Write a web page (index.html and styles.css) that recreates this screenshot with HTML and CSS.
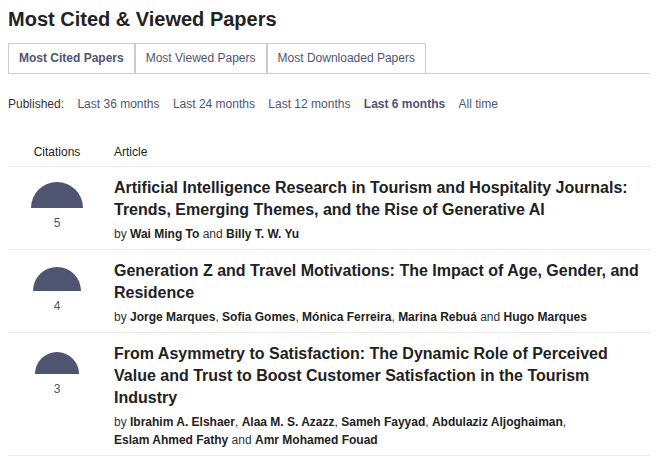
FILE: index.html
```html
<!DOCTYPE html>
<html lang="en">
<head>
<meta charset="utf-8">
<title>Most Cited &amp; Viewed Papers</title>
<link rel="stylesheet" href="styles.css">
</head>
<body>
<h1 class="page-title">Most Cited &amp; Viewed Papers</h1>
<div class="tabs">
  <a class="tab tab-active">Most Cited Papers</a>
  <a class="tab">Most Viewed Papers</a>
  <a class="tab">Most Downloaded Papers</a>
</div>
<div class="period">
  <span class="period-label">Published:</span>
  <a class="period-link">Last 36 months</a>
  <a class="period-link">Last 24 months</a>
  <a class="period-link">Last 12 months</a>
  <a class="period-link period-active">Last 6 months</a>
  <a class="period-link">All time</a>
</div>
<div class="papers">
  <div class="papers-row papers-head">
    <div class="col-cit">Citations</div>
    <div class="col-art">Article</div>
  </div>
  <div class="papers-row paper">
    <div class="col-cit cit-cell">
      <div class="dome-box"><div class="dome" style="width:52px;height:26px"></div></div>
      <div class="cit-num">5</div>
    </div>
    <div class="col-art">
      <div class="paper-title">Artificial Intelligence Research in Tourism and Hospitality Journals: Trends, Emerging Themes, and the Rise of Generative AI</div>
      <div class="paper-authors">by <b>Wai Ming To</b> and <b>Billy T. W. Yu</b></div>
    </div>
  </div>
  <div class="papers-row paper">
    <div class="col-cit cit-cell">
      <div class="dome-box"><div class="dome" style="width:48px;height:24px"></div></div>
      <div class="cit-num">4</div>
    </div>
    <div class="col-art">
      <div class="paper-title">Generation Z and Travel Motivations: The Impact of Age, Gender, and Residence</div>
      <div class="paper-authors">by <b>Jorge Marques</b>, <b>Sofia Gomes</b>, <b>Mónica Ferreira</b>, <b>Marina Rebuá</b> and <b>Hugo Marques</b></div>
    </div>
  </div>
  <div class="papers-row paper">
    <div class="col-cit cit-cell">
      <div class="dome-box"><div class="dome" style="width:44px;height:22px"></div></div>
      <div class="cit-num">3</div>
    </div>
    <div class="col-art">
      <div class="paper-title">From Asymmetry to Satisfaction: The Dynamic Role of Perceived Value and Trust to Boost Customer Satisfaction in the Tourism Industry</div>
      <div class="paper-authors">by <b>Ibrahim A. Elshaer</b>, <b>Alaa M. S. Azazz</b>, <b>Sameh Fayyad</b>, <b>Abdulaziz Aljoghaiman</b>, <b>Eslam Ahmed Fathy</b> and <b>Amr Mohamed Fouad</b></div>
    </div>
  </div>
</div>
</body>
</html>
```
FILE: styles.css
```css
body {
  margin: 8px;
  background: #fff;
  font-family: "Liberation Sans", Arial, sans-serif;
  color: #222;
}

.page-title {
  margin: 0;
  font-size: 20px;
  line-height: 23px;
  font-weight: bold;
  color: #222;
}

.tabs {
  display: flex;
  margin-top: 12px;
}
.tabs::after {
  content: "";
  flex: 1;
  border-bottom: 1px solid #ccc;
}
.tab {
  display: block;
  border: 1px solid #ccc;
  padding: 7px 10px;
  font-size: 12px;
  line-height: 15px;
  color: #4f5571;
  white-space: nowrap;
}
.tab-active {
  font-weight: bold;
}

.period {
  display: flex;
  gap: 13.4px;
  margin-top: 23px;
  font-size: 12px;
  line-height: 14px;
}
.period-label {
  color: #333;
}
.period-link {
  color: #4f5571;
}
.period-active {
  font-weight: bold;
}

.papers {
  margin-top: 34px;
}
.papers-row {
  display: grid;
  grid-template-columns: 98px 1fr;
  border-bottom: 1px solid #e8e8e8;
}
.papers-head {
  font-size: 12px;
  line-height: 14px;
  padding-bottom: 7px;
  color: #222;
}
.col-cit {
  text-align: center;
}
.col-art {
  padding-left: 8px;
}

.paper {
  padding: 10px 0 6px;
}
.cit-cell {
  display: flex;
  flex-direction: column;
  align-items: center;
  padding-top: 5px;
}
.dome-box {
  height: 26px;
  display: flex;
  align-items: flex-end;
}
.dome {
  background: #4f5571;
  border-radius: 100px 100px 0 0;
}
.cit-num {
  margin-top: 8px;
  font-size: 12px;
  line-height: 14px;
  color: #4f5571;
}

.paper-title {
  font-size: 16px;
  line-height: 22px;
  font-weight: bold;
  color: #222;
}
.paper-authors {
  margin-top: 4px;
  font-size: 12px;
  line-height: 18px;
  color: #333;
}
.paper-authors b {
  color: #222;
  white-space: nowrap;
}
```
